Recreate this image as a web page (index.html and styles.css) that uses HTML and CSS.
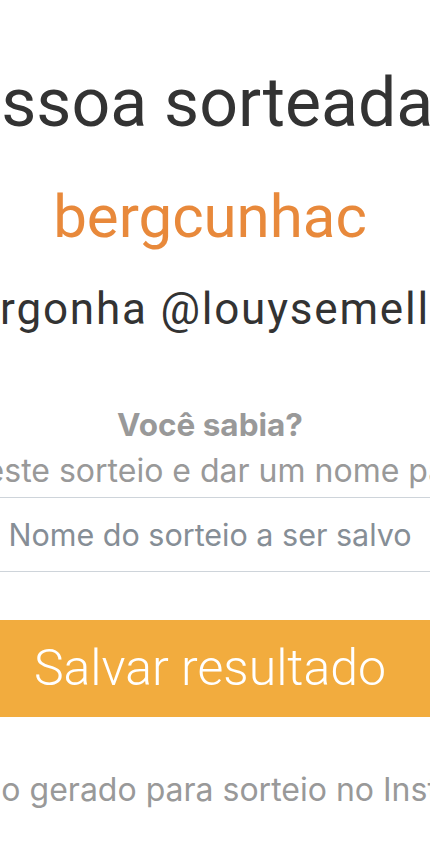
FILE: index.html
```html
<!DOCTYPE html>
<html lang="pt-BR">

<head>
    <meta charset="UTF-8">
    <meta name="viewport" content="width=device-width, initial-scale=1.0">
    <title>Resultado do sorteio</title>
    <link rel="stylesheet" href="styles.css">
</head>

<body>

    <div class="page">
        <!-- Winner -->
        <h1 class="title">Pessoa sorteada</h1>
        <div class="winner">bergcunhac</div>
        <div class="comment">@bergonha @louysemello</div>

        <!-- Save result -->
        <div class="tip">
            <strong class="tip-title">Você sabia?</strong>
            <p class="tip-text">Você pode salvar este sorteio e dar um nome para acessar depois</p>
        </div>

        <input type="text" class="save-name" placeholder="Nome do sorteio a ser salvo">
        <button class="save-btn">Salvar resultado</button>

        <p class="footer-text">Resultado gerado para sorteio no Instagram</p>
    </div>

</body>

</html>
```

FILE: styles.css
```css
* {
    margin: 0;
    padding: 0;
    box-sizing: border-box;
}

body {
    font-family: Roboto, "Liberation Sans", sans-serif;
    background-color: #fff;
    color: #333;
    overflow-x: hidden;
}

.page {
    width: 420px;
    display: flex;
    flex-direction: column;
    align-items: center;
    padding-top: 69px;
    padding-bottom: 40px;
}

.page > * {
    white-space: nowrap;
    flex-shrink: 0;
}

.title {
    margin-right: 64px;
    font-size: 68px;
    font-weight: 400;
    line-height: 1;
    color: #333;
}

.winner {
    margin-top: 50px;
    font-size: 60px;
    line-height: 1;
    color: #e8893b;
}

.comment {
    margin-top: 40px;
    margin-right: 56px;
    font-size: 44px;
    letter-spacing: 1.8px;
    line-height: 1;
    color: #333;
}

.tip {
    margin-top: 78px;
    display: flex;
    flex-direction: column;
    align-items: center;
    font-family: Inter, "Noto Sans", sans-serif;
    color: #999;
}

.tip-title {
    font-size: 31.5px;
    line-height: 1;
    font-weight: 700;
}

.tip-text {
    margin-top: 14px;
    margin-left: 9px;
    font-size: 32px;
    line-height: 1;
}

.save-name {
    margin-top: 10px;
    width: 700px;
    height: 75px;
    border: none;
    border-top: 1px solid #ced4da;
    border-bottom: 1px solid #ced4da;
    font-family: Inter, "Noto Sans", sans-serif;
    font-size: 30.5px;
    text-align: center;
    color: #495057;
    outline: none;
}

.save-name::placeholder {
    color: #868e96;
}

.save-btn {
    margin-top: 48px;
    width: 700px;
    height: 97px;
    border: none;
    background-color: #f2ac3e;
    color: #fff;
    font-family: Roboto, sans-serif;
    font-weight: 300;
    font-size: 50px;
    cursor: pointer;
}

.footer-text {
    margin-top: 57px;
    margin-right: 16px;
    font-family: Inter, "Noto Sans", sans-serif;
    font-size: 32px;
    line-height: 1;
    color: #999;
}
```
